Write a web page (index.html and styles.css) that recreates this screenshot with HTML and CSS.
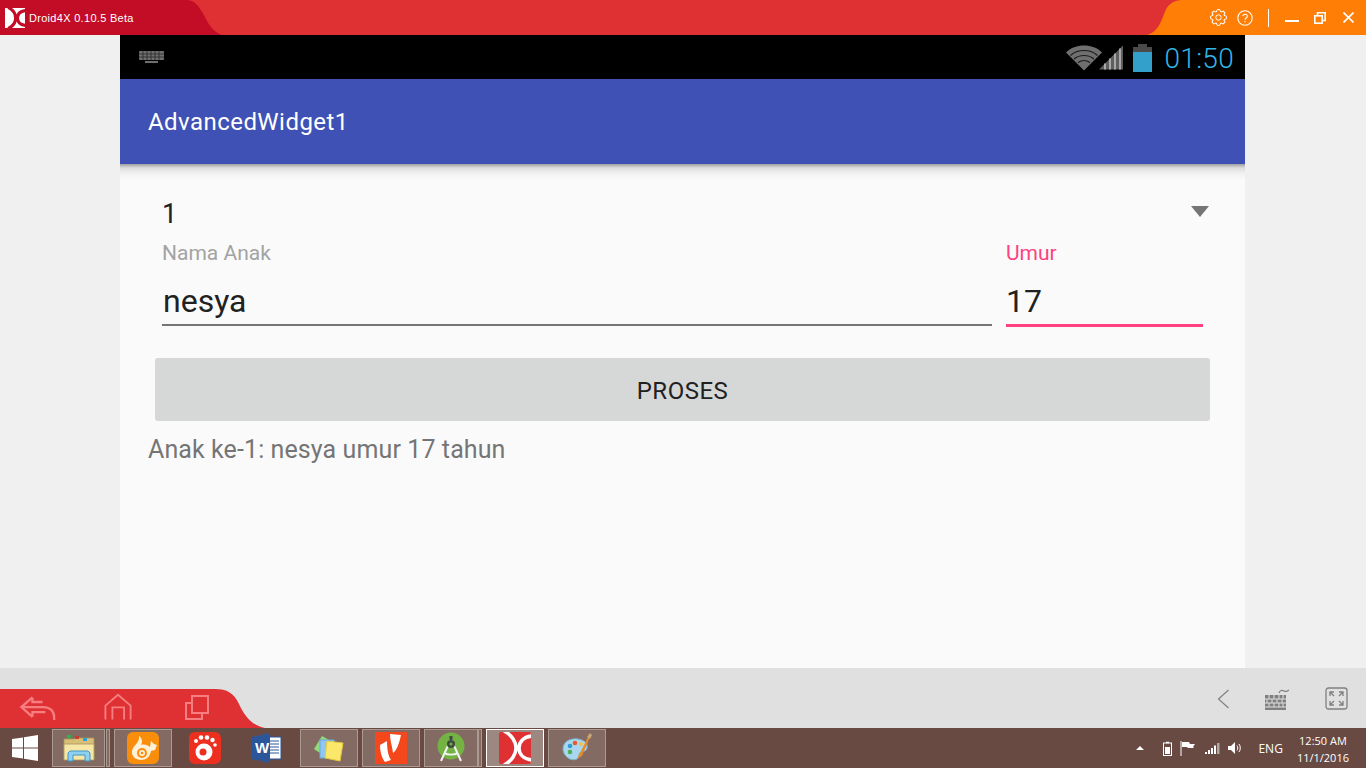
FILE: index.html
```html
<!DOCTYPE html>
<html lang="en">
<head>
<meta charset="utf-8">
<title>Droid4X</title>
<link rel="stylesheet" href="styles.css">
</head>
<body>
<div class="screen">
  <header class="titlebar">
    <div class="tb-left">
      <svg class="logo" width="20" height="20" viewBox="0 0 32 32"><rect width="32" height="32" fill="#fff"/><path d="M5 -1C13 3 17 10 17 16S13 29 5 33M33 4C24 5 20 10 20 16S24 27 33 28" fill="none" stroke="#c30c26" stroke-width="5"/></svg>
      <span class="app-name">Droid4X 0.10.5 Beta</span>
    </div>
    <svg class="curve" width="42" height="35" viewBox="0 0 42 35"><path d="M0 0h8c8 1 12 8 17 17 4 9 10 16 17 18H0z" fill="#c30c26"/></svg>
    <div class="tb-mid"></div>
    <svg class="curve" width="40" height="35" viewBox="0 0 40 35"><path d="M40 0H34C24 1 20 6 17 14 13 26 8 33 0 35H40z" fill="#ff7f06"/></svg>
    <div class="tb-right">
      <svg class="win-i" width="17" height="17" viewBox="-8.500 -8.500 17 17" fill="none" stroke="#fff" stroke-width="1"><g id="cog"><path d="M-2.220-5.360-1.250-7.900H1.250L2.220-5.360"/><path transform="rotate(45)" d="M-2.220-5.360-1.250-7.900H1.250L2.220-5.360"/><path transform="rotate(90)" d="M-2.220-5.360-1.250-7.900H1.250L2.220-5.360"/><path transform="rotate(135)" d="M-2.220-5.360-1.250-7.900H1.250L2.220-5.360"/><path transform="rotate(180)" d="M-2.220-5.360-1.250-7.900H1.250L2.220-5.360"/><path transform="rotate(225)" d="M-2.220-5.360-1.250-7.900H1.250L2.220-5.360"/><path transform="rotate(270)" d="M-2.220-5.360-1.250-7.900H1.250L2.220-5.360"/><path transform="rotate(315)" d="M-2.220-5.360-1.250-7.900H1.250L2.220-5.360"/></g><circle r="2.700"/></svg>
      <svg class="win-i help" width="16" height="16" viewBox="0 0 16 16" fill="none" stroke="#fff" stroke-width="1.100"><circle cx="8" cy="8" r="7.200"/><path d="M5.800 6.200C6 4.800 7 4.200 8 4.200c1.300 0 2.300.8 2.300 2 0 1.800-2.300 1.800-2.300 3.600"/><path d="M8 11v1.300"/></svg>
      <span class="tb-sep"></span>
      <span class="min"></span>
      <svg class="win-i restore" width="12" height="12" viewBox="0 0 12 12" fill="none" stroke="#fff" stroke-width="1.600"><rect x=".8" y="3.800" width="7.400" height="7.400"/><path d="M3.500 3.500V.8h7.700v7.700H8.500"/></svg>
      <svg class="win-i close" width="11" height="11" viewBox="0 0 11 11" fill="none" stroke="#fff" stroke-width="1.700"><path d="M.5.500l10 10M10.500.500l-10 10"/></svg>
    </div>
  </header>

  <main class="stage">
    <div class="android">
      <div class="statusbar">
        <svg class="kbd" width="27" height="14" viewBox="0 0 27 14"><rect x="1" y="1" width="25" height="9" rx="1" fill="#6f6f6f"/><g stroke="#2a2a2a" stroke-width=".8"><path d="M1 4h25M1 7h25M5 1v9M9 1v9M13 1v9M17 1v9M21 1v9"/></g><rect x="7" y="11" width="13" height="2" fill="#6f6f6f"/></svg>
        <div class="status-right">
          <svg class="wifi" width="36" height="27" viewBox="0 0 36 26"><path d="M0 8C5 3 11 1 18 1s13 2 18 7L18 26z" fill="#6f6f6f"/><path d="M4.500 11C8 7.500 13 6 18 6s10 1.500 13.500 5M8 14.500C11 12 14 11 18 11s7 1 10 3.500M12 18c2-1.300 4-2 6-2s4 .7 6 2" stroke="#1c1c1c" stroke-width="1.200" fill="none"/></svg>
          <svg class="sig" width="24" height="27" viewBox="0 0 24 26"><path d="M0 25 24 1v24z" fill="#5f5f5f"/><path d="M6 25v-6M11 25v-11M16 25V9M21 25V4" stroke="#a8a8a8" stroke-width="2"/></svg>
          <svg class="batt" width="19" height="28" viewBox="0 0 19 28"><rect x="5" y="0" width="9" height="3" fill="#4a4a4a"/><rect x="0" y="3" width="19" height="5" fill="#4a4a4a"/><rect x="0" y="8" width="19" height="20" fill="#33a0cc"/></svg>
          <span class="clock">01:50</span>
        </div>
      </div>
      <div class="appbar">AdvancedWidget1</div>
      <div class="content">
        <div class="spinner">
          <span class="spin-val">1</span>
          <span class="spin-arrow"></span>
        </div>
        <div class="fields">
          <div class="field name">
            <label class="f-label">Nama Anak</label>
            <div class="f-value">nesya</div>
          </div>
          <div class="field age">
            <label class="f-label pink">Umur</label>
            <div class="f-value">17</div>
          </div>
        </div>
        <button class="proses" type="button">PROSES</button>
        <p class="result">Anak ke-1: nesya umur 17 tahun</p>
      </div>
    </div>
  </main>

  <section class="navbar">
    <div class="nav-red">
      <svg class="nav-i back" width="38" height="24" viewBox="0 0 40 26" fill="none" stroke="#f77e80" stroke-width="2.500"><path d="M37.500 26v-3c0-7-5-11-12-11H2M14 1.500 2 12l12 10.500M14 1.500v5h11M14 22.500v-5h14"/></svg>
      <svg class="nav-i home" width="28" height="27" viewBox="0 0 30 28" fill="none" stroke="#f77e80" stroke-width="2"><path d="M1.500 28V13L15 1.500 28.500 13v15M9 28V15h12.500v13"/></svg>
      <svg class="nav-i tasks" width="24" height="25" viewBox="0 0 24 25" fill="none" stroke="#f77e80" stroke-width="2"><path d="M7 1h16v17H7zM7 8H1v16h16v-6"/></svg>
    </div>
    <svg class="nav-curve" width="50" height="39" viewBox="0 0 50 39"><path d="M0 0c12 0 19 4 24 15 6 13 14 22 26 24H0z" fill="#df3033"/></svg>
    <div class="nav-spacer"></div>
    <div class="nav-right">
      <svg width="13" height="20" viewBox="0 0 13 20" fill="none" stroke="#808080" stroke-width="1.200"><path d="M11.500 1 1.500 10l10 9"/></svg>
      <svg width="24" height="22" viewBox="0 0 24 22"><path d="M14 5c1-3 3-3 5-2s3 1 5-1" fill="none" stroke="#808080" stroke-width="1.200"/><rect x="0" y="7" width="21" height="15" fill="#808080"/><path d="M0 11h21M0 15h21M0 19h21M4 7v4M9 7v4M14 7v4M18 7v4M2 11v4M7 11v4M12 11v4M17 11v4M4 15v4M9 15v4M14 15v4M18 15v4" stroke="#e0e0e0" stroke-width="1"/></svg>
      <svg width="23" height="23" viewBox="0 0 23 23" fill="none" stroke="#808080" stroke-width="1.300"><rect x="1" y="1" width="21" height="21" rx="2.500"/><path d="M5 9V5h4M5 5l4 4M18 9V5h-4M18 5l-4 4M5 14v4h4M5 18l4-4M18 14v4h-4M18 18l-4-4"/></svg>
    </div>
  </section>

  <footer class="taskbar">
    <svg class="start" width="26" height="26" viewBox="0 0 26 26" fill="#fff"><path d="M0 4l11-1.500v10H0zM12 2.300 26 0v12.500H12zM0 13.500h11v10L0 22zM12 13.500h14V26l-14-2.200z"/></svg>
    <div class="tile t-folder">
      <svg width="32" height="30" viewBox="0 0 32 30"><path d="M1 6h10l2-1h17a1 1 0 0 1 1 1v20H1z" fill="#d8c078" stroke="#a8955a" stroke-width=".8"/><rect x="4" y="2" width="4" height="3" fill="#2eb34a"/><rect x="12" y="3" width="4" height="3" fill="#c8402c"/><rect x="20" y="5" width="4" height="3" fill="#2e9ed6"/><path d="M1 11h30v16H1z" fill="#f6e7a6" stroke="#a8955a" stroke-width=".8"/><path d="M5 28v-8l2-2h18l2 2v8h-5v-6H10v6z" fill="#8ed0f0" stroke="#3f96c6" stroke-width="1"/></svg>
    </div>
    <div class="sliver"></div>
    <div class="tile t-wide">
      <svg width="32" height="32" viewBox="0 0 32 32"><rect width="32" height="32" rx="6" fill="#f98d0c"/><path d="M5 19C6 13 13 11 12 4c3 2 4 6 2 9 3-1 7 0 9 2l1-6 3 3 3 1-2 5-4 1c-1 6-5 9-10 9-5 0-10-4-9-9z" fill="#fff0d8"/><circle cx="15" cy="21" r="5" fill="#f98d0c"/><circle cx="15" cy="21" r="3" fill="#fff0d8"/><circle cx="15" cy="21" r="1.300" fill="#f98d0c"/></svg>
    </div>
    <div class="plain gom">
      <svg width="32" height="32" viewBox="0 0 32 32"><rect width="32" height="32" rx="6" fill="#ec2f1e"/><circle cx="15" cy="20" r="8.500" fill="#fff"/><circle cx="14" cy="20" r="3.500" fill="#ec2f1e"/><circle cx="7" cy="9" r="2" fill="#fff"/><circle cx="12" cy="5.500" r="2.300" fill="#fff"/><circle cx="18" cy="5.500" r="2.300" fill="#fff"/><circle cx="23.500" cy="8" r="2.200" fill="#fff"/><circle cx="26" cy="13" r="1.800" fill="#fff"/></svg>
    </div>
    <div class="plain word">
      <svg width="30" height="30" viewBox="0 0 30 30"><rect x="14" y="4" width="15" height="22" fill="#fff" stroke="#2b579a"/><path d="M17 8h10M17 11h10M17 14h10M17 17h10M17 20h10" stroke="#2b579a"/><path d="M0 4 18 0v30L0 26z" fill="#2b579a"/><text x="3" y="20" class="word-w">W</text></svg>
    </div>
    <div class="tile t-sticky">
      <svg width="32" height="28" viewBox="0 0 32 28"><path d="M1 15 9 2l9 5-8 14z" fill="#92d97e"/><rect x="7" y="6" width="14" height="18" fill="#8fc7f2" stroke="#6ba8dc"/><path d="M14 7l16 2-3 18-15-3z" fill="#fbe86a" stroke="#e4c93f"/></svg>
    </div>
    <div class="tile t-nitro">
      <svg width="32" height="32" viewBox="0 0 32 32"><rect width="32" height="32" fill="#f4481c"/><path d="M15 2 26 3C24 12 22 18 18 21L17 15C16 11 15 6 15 2zM5 13 12 9C12 16 13 24 16 28L10 30C7 26 5 20 5 13z" fill="#fff"/></svg>
    </div>
    <div class="tile t-studio">
      <svg width="32" height="32" viewBox="0 0 32 32"><circle cx="16" cy="14" r="13.500" fill="#74b343"/><path d="M16 7 6 29M16 7l10 22M9 21c4 2 10 2 14 0" stroke="#f2f2f2" stroke-width="2" fill="none"/><circle cx="16" cy="12" r="4" fill="#3d4b3d"/><circle cx="16" cy="12" r="1.500" fill="#74b343"/><rect x="14.500" y="4" width="3" height="4" fill="#3d4b3d"/></svg>
    </div>
    <div class="sliver s-two"></div>
    <div class="tile t-active">
      <svg width="32" height="32" viewBox="0 0 32 32"><rect width="32" height="32" rx="2" fill="#df3033"/><path d="M5 -1C13 3 17 10 17 16S13 29 5 33M33 4C24 5 20 10 20 16S24 27 33 28" fill="none" stroke="#fff" stroke-width="3.500"/></svg>
    </div>
    <div class="tile t-paint">
      <svg width="32" height="32" viewBox="0 0 32 32"><path d="M2 17C2 9 10 6 17 7c6 1 10 4 9 9-1 4-4 3-6 4-3 1-1 5-4 7-6 3-14-3-14-10z" fill="#a9d8ee" stroke="#7fb2cc"/><circle cx="9" cy="14" r="2.300" fill="#2e9ed6"/><circle cx="14" cy="11" r="2.300" fill="#e85a2a"/><circle cx="20" cy="12" r="2" fill="#f2c14a"/><circle cx="9" cy="20" r="2.300" fill="#4caf50"/><path d="M28 3 19 21l-3 6 5-3 8-19z" fill="#e88a2a"/><path d="M26 5l3-4 2 2-2 4z" fill="#c9a679"/></svg>
    </div>
    <div class="task-space"></div>
    <div class="tray">
      <span class="tray-up"></span>
      <svg width="9" height="15" viewBox="0 0 9 15" fill="none" stroke="#fff"><rect x=".5" y="2" width="8" height="12.500"/><path d="M3 1.500h3" stroke-width="1.500"/><rect x="2" y="6" width="5" height="7" fill="#fff" stroke="none"/></svg>
      <svg class="t-flag" width="15" height="15" viewBox="0 0 15 15"><path d="M1 0v15" stroke="#fff"/><path d="M2 1h7l1 2h5l-2 3 1 1h-6L7 6H2z" fill="#fff"/></svg>
      <svg class="t-sig" width="15" height="11" viewBox="0 0 15 11" fill="#fff"><rect x="0" y="9" width="2" height="2"/><rect x="3" y="7" width="2" height="4"/><rect x="6" y="5" width="2" height="6"/><rect x="9" y="2.500" width="2" height="8.500"/><rect x="12" y="0" width="2.500" height="11" fill="#aaa"/></svg>
      <svg width="14" height="14" viewBox="0 0 14 14" fill="none" stroke="#fff"><path d="M0 5h3l4-4v12L3 9H0z" fill="#fff" stroke="none"/><path d="M9 4.500c1 1.500 1 3.500 0 5M11 3c1.700 2 1.700 6 0 8"/></svg>
      <span class="lang">ENG</span>
      <span class="clockbox"><span>12:50 AM</span><span>11/1/2016</span></span>
    </div>
  </footer>
</div>
</body>
</html>
```

FILE: styles.css
```css
* { box-sizing: border-box; }
html, body { margin: 0; padding: 0; }
body { width: 1366px; height: 768px; overflow: hidden; font-family: Roboto, sans-serif; }
.screen { width: 1366px; height: 768px; display: flex; flex-direction: column; }

.titlebar { height: 35px; display: flex; background: #df3033; flex: none; }
.tb-left { width: 180px; background: #c30c26; display: flex; align-items: center; padding: 0 0 0 5px; gap: 4px; color: #fff; }
.logo { flex: none; }
.app-name { font: 11px "Liberation Sans", sans-serif; letter-spacing: .3px; white-space: nowrap; }
.curve { flex: none; display: block; }
.tb-mid { flex: 1; }
.tb-right { width: 179px; background: #ff7f06; display: flex; align-items: center; padding: 0 0 0 23px; }
.win-i { flex: none; display: block; }
.help { margin-left: 10px; }
.tb-sep { width: 1px; height: 18px; background: #fff; margin-left: 15px; }
.min { width: 14px; height: 2px; background: #fff; margin: 6px 0 0 16px; }
.restore { margin-left: 15px; }
.close { margin-left: 17px; }

.stage { flex: 1; background: #f0f0f0; padding: 0 121px 0 120px; min-height: 0; }
.android { height: 100%; background: #fafafa; display: flex; flex-direction: column; }
.statusbar { height: 44px; background: #000; display: flex; align-items: center; justify-content: space-between; padding: 0 11px 0 18px; flex: none; }
.status-right { display: flex; align-items: center; }
.status-right svg { display: block; filter: blur(.4px); }
.kbd { filter: blur(.4px); }
.sig { margin-left: -3px; }
.batt { margin: 2px 0 0 10px; }
.clock { font: 300 28px Roboto, sans-serif; letter-spacing: .3px; color: #33b5e5; margin: 3px 0 0 12px; }
.appbar { height: 85px; background: #3f51b5; color: #fff; font-size: 24px; letter-spacing: .45px; display: flex; align-items: center; padding: 1px 0 0 28px; flex: none; }
.content { flex: 1; padding: 0 35px 0 28px; display: flex; flex-direction: column; background: linear-gradient(#a0a0a0, #dedede 4px, #f2f2f2 10px, #fafafa 16px) no-repeat top / 100% 16px; }
.spinner { height: 71px; padding: 33px 1px 0 14px; display: flex; justify-content: space-between; font-size: 27px; color: #212121; }
.spin-val { line-height: 34px; }
.spin-arrow { width: 0; height: 0; border-style: solid; border-width: 11px 9px 0; border-color: #757575 transparent transparent; margin-top: 9px; }
.fields { display: flex; gap: 14px; padding-left: 14px; padding-right: 7px; }
.field { display: flex; flex-direction: column; }
.name { flex: 1; }
.age { width: 197px; }
.f-label { font-size: 21px; line-height: 26px; color: #a3a3a3; margin-top: 5px; }
.pink { color: #ff4081; }
.f-value { font-size: 32px; line-height: 40px; color: #212121; margin-top: 15px; height: 45px; border-bottom: 2px solid #757575; }
.name .f-value { padding-left: 1px; }
.age .f-value { border-bottom: 3px solid #ff4081; height: 46px; }
.proses { margin: 31px 0 0 7px; height: 63px; width: 1055px; background: #d6d7d7; border: 0; border-radius: 3px; font: 24px Roboto, sans-serif; letter-spacing: .5px; color: #212121; padding: 2px 0 0; }
.result { margin: 13px 0 0; font-size: 25px; letter-spacing: .1px; line-height: 32px; color: #757575; }

.navbar { height: 60px; background: #e0e0e0; display: flex; align-items: flex-end; flex: none; }
.nav-red { width: 215px; height: 39px; background: #df3033; display: flex; align-items: flex-end; padding: 0 0 8px 19px; }
.nav-i { display: block; flex: none; }
.home { margin-left: 47px; }
.tasks { margin-left: 53px; }
.nav-curve { flex: none; display: block; }
.nav-spacer { flex: 1; }
.nav-right { align-self: flex-start; display: flex; align-items: center; padding: 19px 18px 0 0; }
.nav-right svg { display: block; margin-left: 36px; }
.nav-right svg:nth-child(2) { margin-left: 35px; }

.taskbar { height: 40px; background: #694a42; display: flex; align-items: center; flex: none; padding-left: 12px; }
.start { flex: none; }
.tile { height: 38px; background: #836a63; border: 1px solid #aa9a94; display: flex; align-items: center; justify-content: center; flex: none; }
.plain { flex: none; display: flex; align-items: center; justify-content: center; height: 38px; }
.t-folder { width: 53px; margin-left: 14px; }
.sliver { width: 4px; height: 38px; background: #836a63; border: 1px solid #aa9a94; margin-left: 1px; flex: none; }
.t-wide { width: 58px; margin-left: 4px; }
.gom { width: 32px; margin-left: 17px; }
.word { width: 30px; margin-left: 31px; }
.t-sticky { width: 58px; margin-left: 18px; }
.t-nitro { width: 58px; margin-left: 4px; }
.t-studio { width: 54px; margin-left: 4px; }
.s-two { margin-left: 0; }
.t-active { width: 58px; margin-left: 4px; background: #9c8781; border-color: #fff; }
.t-paint { width: 58px; margin-left: 4px; }
.word-w { font: bold 15px "Liberation Sans", sans-serif; fill: #fff; }
.task-space { flex: 1; }
.tray { display: flex; align-items: center; color: #fff; padding-right: 17px; }
.tray svg { display: block; margin-left: 8px; flex: none; }
.tray svg.t-sig { margin-left: 10px; }
.tray-up { width: 0; height: 0; border-style: solid; border-width: 0 4px 4px; border-color: transparent transparent #fff; margin-right: 11px; }
.lang { font: 12px "Open Sans", sans-serif; margin-left: 16px; }
.clockbox { display: flex; flex-direction: column; align-items: center; font: 11px/17px "Open Sans", sans-serif; margin: 2px 0 0 14px; }
```
